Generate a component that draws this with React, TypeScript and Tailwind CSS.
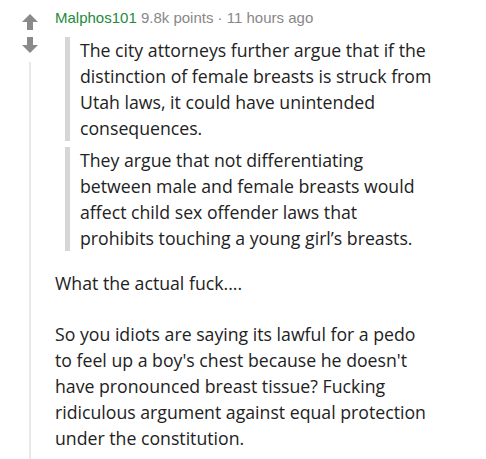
import React from "react";

const Arrow = ({ down }: { down?: boolean }) => (
  <svg width="16" height="16" viewBox="0 0 16 16" className={down ? "rotate-180" : ""}>
    <path d="M8 0 L16 8 L11 8 L11 16 L5 16 L5 8 L0 8 Z" fill="#8a8a8a" />
  </svg>
);

export default function App() {
  return (
    <div className="w-[486px] h-[459px] bg-white overflow-hidden flex">
      <div className="w-[55px] flex flex-col items-center pl-[5px] pt-[14px] shrink-0">
        <Arrow />
        <div className="h-[7px]" />
        <Arrow down />
        <div className="mt-[9px] w-[2px] flex-1 bg-[#e8e8e8]" />
      </div>
      <div className="w-[379px] pt-[8px]">
        <div className="text-[15px] leading-[20px] font-['Liberation_Sans',Arial,sans-serif] whitespace-nowrap">
          <span className="text-[#228b3c]">Malphos101</span>
          <span className="text-[#888]"> 9.8k points · 11 hours ago</span>
        </div>
        <div className="mt-[9px] font-['Open_Sans',sans-serif] text-[17.7px] leading-[26px] text-[#222]">
          <div className="ml-[10px] border-l-[5px] border-[#d6d6d6] pl-[10px]">
            The city attorneys further argue that if the distinction of female breasts is struck from Utah laws, it could have unintended consequences.
          </div>
          <div className="ml-[10px] border-l-[5px] border-[#d6d6d6] pl-[10px] mt-[6px]">
            They argue that not differentiating between male and female breasts would affect child sex offender laws that prohibits touching a young girl’s breasts.
          </div>
          <p className="mt-[19px]">What the actual fuck....</p>
          <p className="mt-[25px]">
            So you idiots are saying its lawful for a pedo to feel up a boy's chest because he doesn't have pronounced breast tissue? Fucking ridiculous argument against equal protection under the constitution.
          </p>
        </div>
      </div>
    </div>
  );
}
